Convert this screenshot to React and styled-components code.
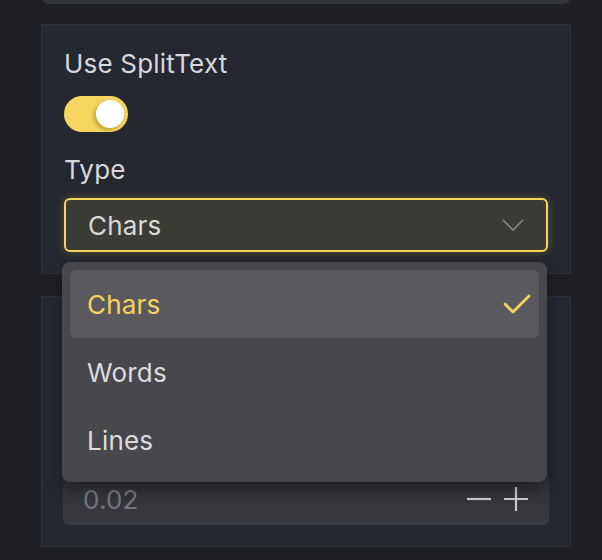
import styled, { createGlobalStyle } from "styled-components";

const GlobalStyle = createGlobalStyle`
  html, body {
    margin: 0;
    padding: 0;
    background: #1e2024;
    font-family: Inter, "Noto Sans", "Liberation Sans", sans-serif;
    -webkit-font-smoothing: antialiased;
  }
`;

const Page = styled.div`
  width: 602px;
  height: 560px;
  overflow: hidden;
  background: #1e2024;
  padding: 0 31px 0 41px;
  box-sizing: border-box;
  display: flex;
  flex-direction: column;
  font-size: 26px;
  letter-spacing: 0.2px;
`;

const TopCard = styled.div`
  height: 20px;
  margin-top: -16px;
  background: #32353b;
  border-radius: 8px;
  flex-shrink: 0;
`;

const Panel = styled.section`
  position: relative;
  margin-top: ${({ gap }) => gap}px;
  background: #252830;
  border: 1px solid #2f3239;
  padding: ${({ pad }) => pad};
  display: flex;
  flex-direction: column;
  flex-shrink: 0;
  z-index: ${({ raised }) => (raised ? 2 : 1)};
`;

const Label = styled.div`
  line-height: 32px;
  color: #d7d8db;
  margin-top: ${({ top }) => top || 0}px;
`;

const Toggle = styled.div`
  margin-top: 16px;
  width: 64px;
  height: 36px;
  border-radius: 18px;
  background: #f6d660;
  position: relative;
  &::after {
    content: "";
    position: absolute;
    right: 4px;
    top: 4px;
    width: 28px;
    height: 28px;
    border-radius: 50%;
    background: #ffffff;
    box-shadow: -2px 2px 4px rgba(120, 90, 0, 0.45);
  }
`;

const SelectWrap = styled.div`
  position: relative;
  margin-top: 12px;
`;

const SelectBox = styled.div`
  height: 54px;
  box-sizing: border-box;
  border: 2px solid #f6d35a;
  border-radius: 6px;
  background: #3c3c37;
  box-shadow: 0 0 8px rgba(246, 211, 90, 0.28);
  padding: 0 22px;
  display: flex;
  align-items: center;
  justify-content: space-between;
  color: #d9d9d9;
`;

const Menu = styled.div`
  position: absolute;
  top: 64px;
  left: -2px;
  width: 485px;
  box-sizing: border-box;
  padding: 8px;
  background: #48474c;
  border-radius: 8px;
  box-shadow: 0 6px 16px rgba(0, 0, 0, 0.35);
`;

const Option = styled.div`
  height: 68px;
  box-sizing: border-box;
  padding: 0 8px 0 17px;
  display: flex;
  align-items: center;
  justify-content: space-between;
  border-radius: 6px;
  color: ${({ active }) => (active ? "#f6d35a" : "#dcdcde")};
  background: ${({ active }) => (active ? "#5a595e" : "transparent")};
`;

const Hidden = styled.div`
  height: 142px;
`;

const NumberInput = styled.div`
  height: 52px;
  margin-top: 12px;
  border-radius: 6px;
  background: linear-gradient(180deg, #2f3035 0%, #3a3b40 100%);
  display: flex;
  align-items: center;
  justify-content: space-between;
  padding: 0 21px 0 20px;
  color: #76777c;
`;

const Steppers = styled.div`
  display: flex;
  align-items: center;
  gap: 13px;
`;

const Chevron = () => (
  <svg width="22" height="12" viewBox="0 0 22 12" fill="none">
    <path d="M1 1 L11 11 L21 1" stroke="#85868a" strokeWidth="1.6" />
  </svg>
);

const Check = () => (
  <svg width="28" height="20" viewBox="0 0 28 20" fill="none">
    <path
      d="M2 10 L10 18 L26 2"
      stroke="#f6d35a"
      strokeWidth="2.8"
      strokeLinecap="round"
      strokeLinejoin="round"
    />
  </svg>
);

const Minus = () => (
  <svg width="24" height="24" viewBox="0 0 24 24">
    <path d="M0 12 H24" stroke="#c9cacd" strokeWidth="2.2" />
  </svg>
);

const Plus = () => (
  <svg width="24" height="24" viewBox="0 0 24 24">
    <path d="M0 12 H24 M12 0 V24" stroke="#c9cacd" strokeWidth="2.2" />
  </svg>
);

const options = ["Chars", "Words", "Lines"];

export default function App() {
  return (
    <>
      <GlobalStyle />
      <Page>
        <TopCard />
        <Panel gap={20} pad="23px 22px 21px" raised>
          <Label>Use SplitText</Label>
          <Toggle />
          <Label top={22}>Type</Label>
          <SelectWrap>
            <SelectBox>
              <span>Chars</span>
              <Chevron />
            </SelectBox>
            <Menu>
              {options.map((o) => (
                <Option key={o} active={o === "Chars"}>
                  <span>{o}</span>
                  {o === "Chars" && <Check />}
                </Option>
              ))}
            </Menu>
          </SelectWrap>
        </Panel>
        <Panel gap={22} pad="22px 21px 21px 21px">
          <Hidden />
          <NumberInput>
            <span>0.02</span>
            <Steppers>
              <Minus />
              <Plus />
            </Steppers>
          </NumberInput>
        </Panel>
      </Page>
    </>
  );
}
